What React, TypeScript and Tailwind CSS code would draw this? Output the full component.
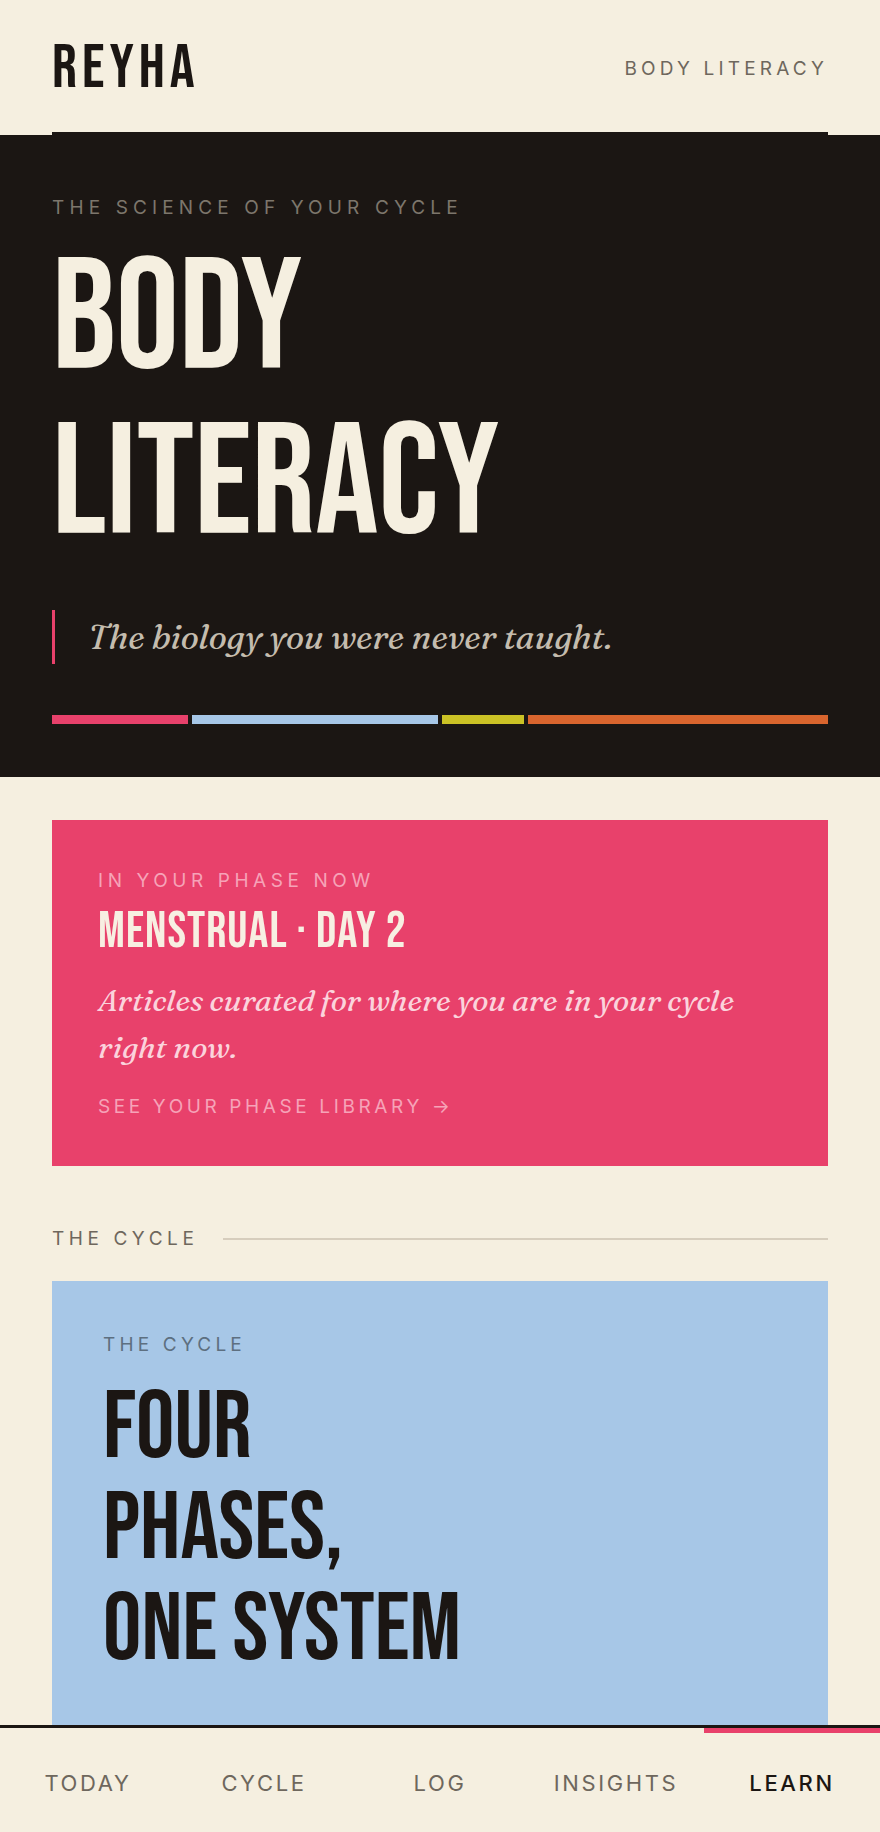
const display = 'font-["Bebas_Neue","Oswald","Roboto_Condensed",sans-serif]'
const serif = 'font-["Fraunces","Newsreader","Liberation_Serif",serif]'
const sans = 'font-["Inter","DM_Sans","Liberation_Sans",sans-serif]'

const phases = [
  { name: 'menstrual', color: 'bg-[#e8416b]', grow: 'flex-[5]' },
  { name: 'follicular', color: 'bg-[#a7c7e7]', grow: 'flex-[9]' },
  { name: 'ovulatory', color: 'bg-[#cbc225]', grow: 'flex-[3]' },
  { name: 'luteal', color: 'bg-[#d9652e]', grow: 'flex-[11]' },
]

const tabs = ['TODAY', 'CYCLE', 'LOG', 'INSIGHTS', 'LEARN']

function Header() {
  return (
    <header className="px-[52px]">
      <div className="h-[135px] border-b-[3px] border-[#1b1613] flex items-center justify-between">
        <span className={`${display} text-[62px] leading-none tracking-[0.08em] text-[#1b1613] pt-[6px]`}>REYHA</span>
        <span className={`${sans} text-[19px] tracking-[0.22em] text-[#6e675d] pt-[6px]`}>BODY LITERACY</span>
      </div>
    </header>
  )
}

function Hero() {
  return (
    <section className="bg-[#1b1613] px-[52px] pt-[62px] pb-[53px]">
      <p className={`${sans} text-[19px] leading-[22px] tracking-[0.27em] text-[#7d766c]`}>THE SCIENCE OF YOUR CYCLE</p>
      <h1 className={`${display} text-[158px] leading-[165px] text-[#f5efe0] mt-[18px]`}>
        BODY
        <br />
        LITERACY
      </h1>
      <div className="border-l-[3px] border-[#e8416b] pl-[33px] mt-[43px] h-[54px] flex items-center">
        <p className={`${serif} italic font-normal text-[34px] leading-none text-[#c4bcae]`}>The biology you were never taught.</p>
      </div>
      <div className="flex gap-[4px] mt-[51px]">
        {phases.map((p) => (
          <div key={p.name} className={`h-[9px] ${p.color} ${p.grow}`} />
        ))}
      </div>
    </section>
  )
}

function PhaseCard() {
  return (
    <div className="bg-[#e8416b] px-[46px] pt-[50px] pb-[48px]">
      <p className={`${sans} text-[19px] leading-[22px] tracking-[0.24em] text-[#f6a3b8]`}>IN YOUR PHASE NOW</p>
      <h2 className={`${display} text-[50px] leading-[56px] tracking-[0.02em] text-[#f7efe2] mt-[12px]`}>MENSTRUAL · DAY 2</h2>
      <p className={`${serif} italic font-normal text-[30.5px] leading-[47px] text-[#fbd3dc] mt-[17px] max-w-[660px]`}>
        Articles curated for where you are in your cycle right now.
      </p>
      <button className={`${sans} text-[19px] leading-[22px] tracking-[0.19em] text-[#f6a3b8] mt-[25px] block`}>
        SEE YOUR PHASE LIBRARY →
      </button>
    </div>
  )
}

function SectionLabel({ label }: { label: string }) {
  return (
    <div className="flex items-center gap-[25px]">
      <span className={`${sans} text-[19px] leading-[22px] tracking-[0.24em] text-[#6e675d]`}>{label}</span>
      <div className="flex-1 h-[2px] bg-[#d6cdbd]" />
    </div>
  )
}

function CycleCard() {
  return (
    <div className="bg-[#a7c7e7] px-[51px] pt-[53px] pb-[160px]">
      <p className={`${sans} text-[19px] leading-[22px] tracking-[0.22em] text-[#5d6f80]`}>THE CYCLE</p>
      <h2 className={`${display} text-[96px] leading-[101px] text-[#1b1613] mt-[22px]`}>
        FOUR
        <br />
        PHASES,
        <br />
        ONE SYSTEM
      </h2>
    </div>
  )
}

function BottomNav() {
  return (
    <nav className="fixed bottom-0 left-0 right-0 bg-[#f5efe0] border-t-[3px] border-[#1b1613] h-[107px] grid grid-cols-5">
      {tabs.map((t) => {
        const active = t === 'LEARN'
        return (
          <div key={t} className="relative flex items-center justify-center">
            {active && <div className="absolute top-0 left-0 right-0 h-[5px] bg-[#e8416b]" />}
            <span className={`${sans} text-[22px] tracking-[0.12em] pt-[6px] ${active ? 'text-[#1b1613] font-medium' : 'text-[#6e675d]'}`}>{t}</span>
          </div>
        )
      })}
    </nav>
  )
}

export default function App() {
  return (
    <div className="min-h-screen bg-[#f5efe0] pb-[107px]">
      <Header />
      <Hero />
      <main className="px-[52px] pt-[43px]">
        <PhaseCard />
        <div className="mt-[62px]">
          <SectionLabel label="THE CYCLE" />
        </div>
        <div className="mt-[31px]">
          <CycleCard />
        </div>
      </main>
      <BottomNav />
    </div>
  )
}
